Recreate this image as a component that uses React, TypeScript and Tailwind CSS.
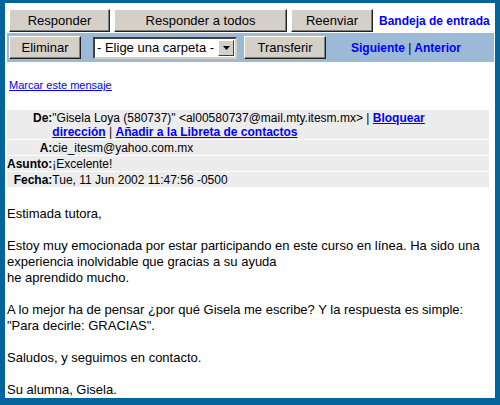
import React from 'react';

const btn =
  'bg-[#d4d0c8] border border-t-white border-l-white border-b-[#202020] border-r-[#202020] shadow-[inset_-1px_-1px_0_#808080] text-[13px] leading-none text-black flex items-center justify-center';

const link = 'text-[#0000ff] underline font-bold';

const label = 'w-px font-bold text-right whitespace-nowrap pt-[1px]';

export default function App() {
  return (
    <div
      className="w-[500px] h-[405px] bg-[#03649c] pt-[3px] pl-[5px] pr-[5px] pb-[7px]"
      style={{ fontFamily: '"Liberation Sans", Arial, sans-serif' }}
    >
      <div className="w-full h-full bg-white overflow-hidden">
        {/* top toolbar */}
        <div className="flex items-center pt-[6px] pl-[4px] h-[29px]">
          <button className={`${btn} w-[101px] h-[23px]`}>Responder</button>
          <button className={`${btn} w-[173px] h-[23px] ml-[4px]`}>Responder a todos</button>
          <button className={`${btn} w-[82px] h-[23px] ml-[4px]`}>Reenviar</button>
          <span className="ml-[6px] text-[12px] font-bold text-[#0000ff]">Bandeja de entrada</span>
        </div>

        {/* folder bar */}
        <div className="mt-[1px] ml-[2px] w-[487px] h-[29px] bg-[#9cbad6] flex items-center pl-[2px]">
          <button className={`${btn} w-[72px] h-[23px]`}>Eliminar</button>
          <div className="ml-[12px] w-[144px] h-[22px] bg-white border-2 border-t-[#404040] border-l-[#404040] border-b-[#d4d0c8] border-r-[#d4d0c8] flex items-center">
            <span className="flex-1 text-[13px] leading-none pl-[2px] whitespace-nowrap">- Elige una carpeta -</span>
            <span className="w-[16px] h-[16px] mr-[1px] bg-[#d4d0c8] border border-t-white border-l-white border-b-[#404040] border-r-[#404040] flex items-center justify-center">
              <svg width="7" height="4" viewBox="0 0 7 4">
                <polygon points="0,0 7,0 3.5,4" fill="#000" />
              </svg>
            </span>
          </div>
          <button className={`${btn} w-[82px] h-[23px] ml-[7px]`}>Transferir</button>
          <span className="ml-[25px] text-[12px] font-bold text-[#0000ff]">
            Siguiente <span className="font-normal text-black">|</span> Anterior
          </span>
        </div>

        {/* mark link */}
        <div className="mt-[17px] ml-[4px] text-[11px] leading-[13px]">
          <a className="text-[#0000ff] underline">Marcar este mensaje</a>
        </div>

        {/* headers */}
        <table className="mt-[17px] ml-[2px] w-[482px] border-separate border-spacing-y-[1px] text-[12px] leading-[14px]">
          <tbody>
            <tr className="bg-[#ececec]">
              <td className={`${label} align-top`}>De:</td>
              <td className="pt-[1px]">
                "Gisela Loya (580737)" &lt;al00580737@mail.mty.itesm.mx&gt; |{' '}
                <a className={link}>
                  Bloquear
                  <br />
                  dirección
                </a>{' '}
                | <a className={link}>Añadir a la Libreta de contactos</a>
              </td>
            </tr>
            <tr className="bg-[#ececec]">
              <td className={label}>A:</td>
              <td className="pt-[1px]">cie_itesm@yahoo.com.mx</td>
            </tr>
            <tr className="bg-[#ececec]">
              <td className={label}>Asunto:</td>
              <td className="pt-[1px]">¡Excelente!</td>
            </tr>
            <tr className="bg-[#ececec]">
              <td className={label}>Fecha:</td>
              <td className="pt-[1px]">Tue, 11 Jun 2002 11:47:56 -0500</td>
            </tr>
          </tbody>
        </table>

        {/* body */}
        <div className="mt-[18px] ml-[2px] text-[13px] leading-[16px] text-black">
          <p>Estimada tutora,</p>
          <br />
          <p>
            Estoy muy emocionada por estar participando en este curso en línea. Ha sido una
            <br />
            experiencia inolvidable que gracias a su ayuda
            <br />
            he aprendido mucho.
          </p>
          <br />
          <p>
            A lo mejor ha de pensar ¿por qué Gisela me escribe? Y la respuesta es simple:
            <br />
            "Para decirle: GRACIAS".
          </p>
          <br />
          <p>Saludos, y seguimos en contacto.</p>
          <br />
          <p>Su alumna, Gisela.</p>
        </div>
      </div>
    </div>
  );
}
